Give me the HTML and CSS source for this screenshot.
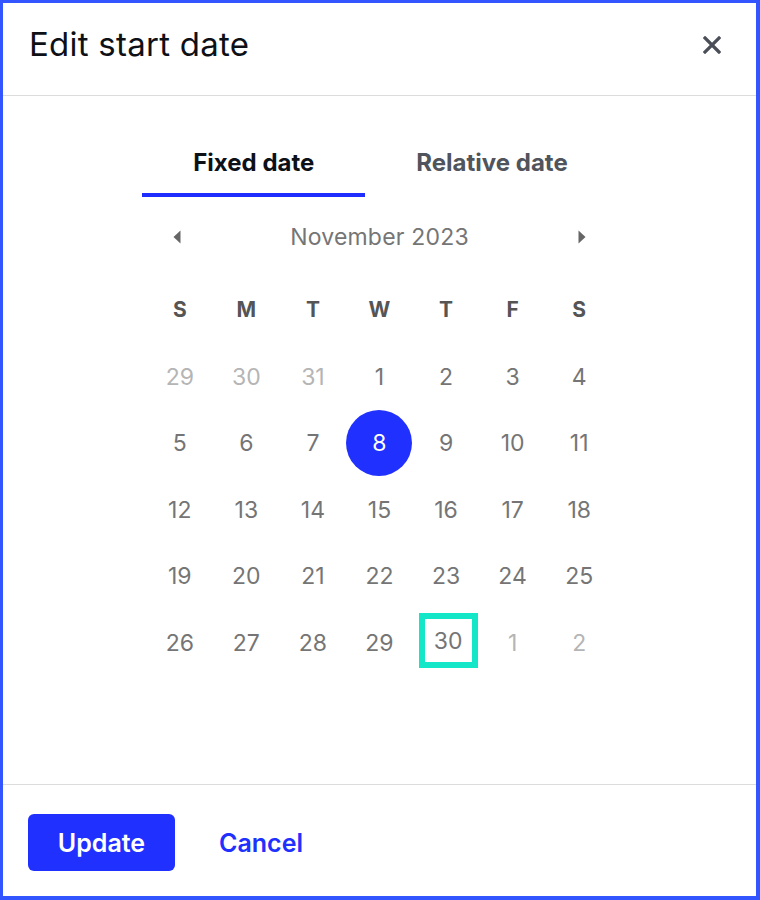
FILE: index.html
```html
<!DOCTYPE html>
<html lang="en">
<head>
<meta charset="utf-8">
<title>Edit start date</title>
<link rel="stylesheet" href="styles.css">
</head>
<body>
<div class="dialog">
  <header class="header">
    <h1 class="title">Edit start date</h1>
    <button class="close" aria-label="Close">
      <svg width="18" height="18" viewBox="0 0 18 18"><path d="M2 2L16 16M16 2L2 16" stroke="#4a4f57" stroke-width="3.2" stroke-linecap="square" fill="none"/></svg>
    </button>
  </header>
  <main class="body">
    <div class="tabs">
      <div class="tab active">Fixed date</div>
      <div class="tab">Relative date</div>
    </div>
    <div class="calendar">
      <div class="nav">
        <span class="arrow"><svg width="8" height="14" viewBox="0 0 8 14"><path d="M7.5 0.5V13.5L0.5 7Z" fill="#666"/></svg></span>
        <span class="month">November 2023</span>
        <span class="arrow"><svg width="8" height="14" viewBox="0 0 8 14"><path d="M0.5 0.5V13.5L7.5 7Z" fill="#666"/></svg></span>
      </div>
      <div class="grid">
        <div class="dow">S</div><div class="dow">M</div><div class="dow">T</div><div class="dow">W</div><div class="dow">T</div><div class="dow">F</div><div class="dow">S</div>
        <div class="day other">29</div><div class="day other">30</div><div class="day other">31</div><div class="day">1</div><div class="day">2</div><div class="day">3</div><div class="day">4</div>
        <div class="day">5</div><div class="day">6</div><div class="day">7</div><div class="day"><span class="selected">8</span></div><div class="day">9</div><div class="day">10</div><div class="day">11</div>
        <div class="day">12</div><div class="day">13</div><div class="day">14</div><div class="day">15</div><div class="day">16</div><div class="day">17</div><div class="day">18</div>
        <div class="day">19</div><div class="day">20</div><div class="day">21</div><div class="day">22</div><div class="day">23</div><div class="day">24</div><div class="day">25</div>
        <div class="day">26</div><div class="day">27</div><div class="day">28</div><div class="day">29</div><div class="day"><span class="focused">30</span></div><div class="day other">1</div><div class="day other">2</div>
      </div>
    </div>
  </main>
  <footer class="footer">
    <button class="btn-primary">Update</button>
    <button class="btn-link">Cancel</button>
  </footer>
</div>
</body>
</html>
```
FILE: styles.css
```css
html, body {
  margin: 0;
  padding: 0;
  background: #fff;
}
body {
  font-family: Inter, "Noto Sans", "Liberation Sans", sans-serif;
}
.dialog {
  width: 760px;
  height: 900px;
  box-sizing: border-box;
  border-style: solid;
  border-color: #3355ff;
  border-width: 3px 4px 4px 3px;
  display: flex;
  flex-direction: column;
  background: #fff;
}
.header {
  height: 93px;
  box-sizing: border-box;
  padding: 0 35px 9px 26px;
  border-bottom: 1px solid #dcdcdc;
  display: flex;
  align-items: center;
  justify-content: space-between;
  flex: none;
}
.title {
  margin: 0;
  font-size: 33px;
  letter-spacing: 0.25px;
  font-weight: 400;
  color: #0d1117;
  line-height: 1.2;
}
.close {
  border: 0;
  background: none;
  padding: 0;
  width: 18px;
  height: 18px;
  display: flex;
  cursor: pointer;
}
.body {
  flex: 1;
  padding-top: 37px;
  display: flex;
  flex-direction: column;
  align-items: center;
}
.tabs {
  display: flex;
  margin-left: 2px;
}
.tab {
  padding: 16px 51px 16px;
  font-size: 24px;
  line-height: 28px;
  font-weight: 700;
  color: #50545c;
  border-bottom: 4px solid transparent;
}
.tab.active {
  color: #0d1117;
  border-bottom-color: #1f2eff;
}
.calendar {
  width: 466px;
  margin-top: 20px;
}
.nav {
  height: 40px;
  display: flex;
  align-items: center;
  justify-content: space-between;
  padding: 0 26px;
}
.arrow {
  display: flex;
}
.month {
  font-size: 23px;
  letter-spacing: 0.2px;
  color: #757575;
}
.grid {
  margin-top: 19px;
  display: grid;
  grid-template-columns: repeat(7, 1fr);
  grid-template-rows: 67.5px;
  grid-auto-rows: 66.5px;
}
.dow, .day {
  display: flex;
  align-items: center;
  justify-content: center;
}
.dow {
  font-size: 21px;
  font-weight: 700;
  color: #555;
}
.day {
  font-size: 23px;
  color: #757575;
}
.day.other {
  color: #b5b5b5;
}
.selected {
  width: 66px;
  height: 66px;
  border-radius: 50%;
  background: #2030ff;
  color: #fff;
  display: flex;
  align-items: center;
  justify-content: center;
}
.focused {
  width: 47px;
  height: 43px;
  border: 6px solid #14e6c8;
  display: flex;
  align-items: center;
  justify-content: center;
  margin: 0 0 4px 4px;
}
.footer {
  flex: none;
  height: 112px;
  box-sizing: border-box;
  border-top: 1px solid #dcdcdc;
  padding: 29px 25px 0;
  display: flex;
  align-items: flex-start;
}
.btn-primary {
  width: 147px;
  height: 57px;
  border: 0;
  border-radius: 6px;
  background: #2030ff;
  color: #fff;
  font-family: inherit;
  font-size: 25px;
  font-weight: 600;
  cursor: pointer;
}
.btn-link {
  margin-left: 44px;
  height: 57px;
  border: 0;
  padding: 0;
  background: none;
  color: #2030ff;
  font-family: inherit;
  font-size: 25px;
  font-weight: 600;
  cursor: pointer;
}
```
